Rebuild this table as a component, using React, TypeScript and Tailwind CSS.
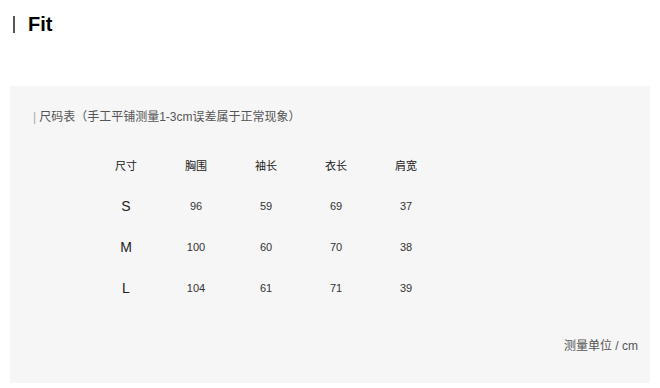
const rows = [
  ["S", "96", "59", "69", "37"],
  ["M", "100", "60", "70", "38"],
  ["L", "104", "61", "71", "39"],
];

const heads = ["尺寸", "胸围", "袖长", "衣长", "肩宽"];

export default function App() {
  return (
    <div className="w-[660px] h-[388px] bg-white overflow-hidden" style={{ fontFamily: '"Liberation Sans", "Noto Sans CJK SC", sans-serif' }}>
      <div className="flex items-center pt-[14px] pl-[13px] h-[34px]">
        <div className="w-[2px] h-[17px] bg-[#555]" />
        <div className="ml-[13px] text-[20px] font-bold text-black leading-none">Fit</div>
      </div>
      <div className="ml-[10px] mr-[10px] mt-[52px] h-[297px] bg-[#f6f6f6] relative">
        <div className="flex items-center pt-[24px] pl-[23px] text-[12px] leading-[14px] text-[#555]">
          <span className="text-[#aaa] mr-[3px]">|</span>
          <span>尺码表（手工平铺测量1-3cm误差属于正常现象）</span>
        </div>
        <div className="ml-[81px] mt-[22px]">
          <div className="flex h-[40px] items-center text-[11px] text-[#222]">
            {heads.map((h) => (
              <div key={h} className="w-[70px] text-center">{h}</div>
            ))}
          </div>
          {rows.map((r) => (
            <div key={r[0]} className="flex h-[41px] items-center text-[11px] text-[#333]">
              {r.map((c, i) => (
                <div key={i} className={`w-[70px] text-center ${i === 0 ? "text-[14px] text-[#222]" : ""}`}>{c}</div>
              ))}
            </div>
          ))}
        </div>
        <div className="absolute right-[12px] top-[253px] text-[12px] text-[#555] leading-[14px]">测量单位 / cm</div>
      </div>
    </div>
  );
}
